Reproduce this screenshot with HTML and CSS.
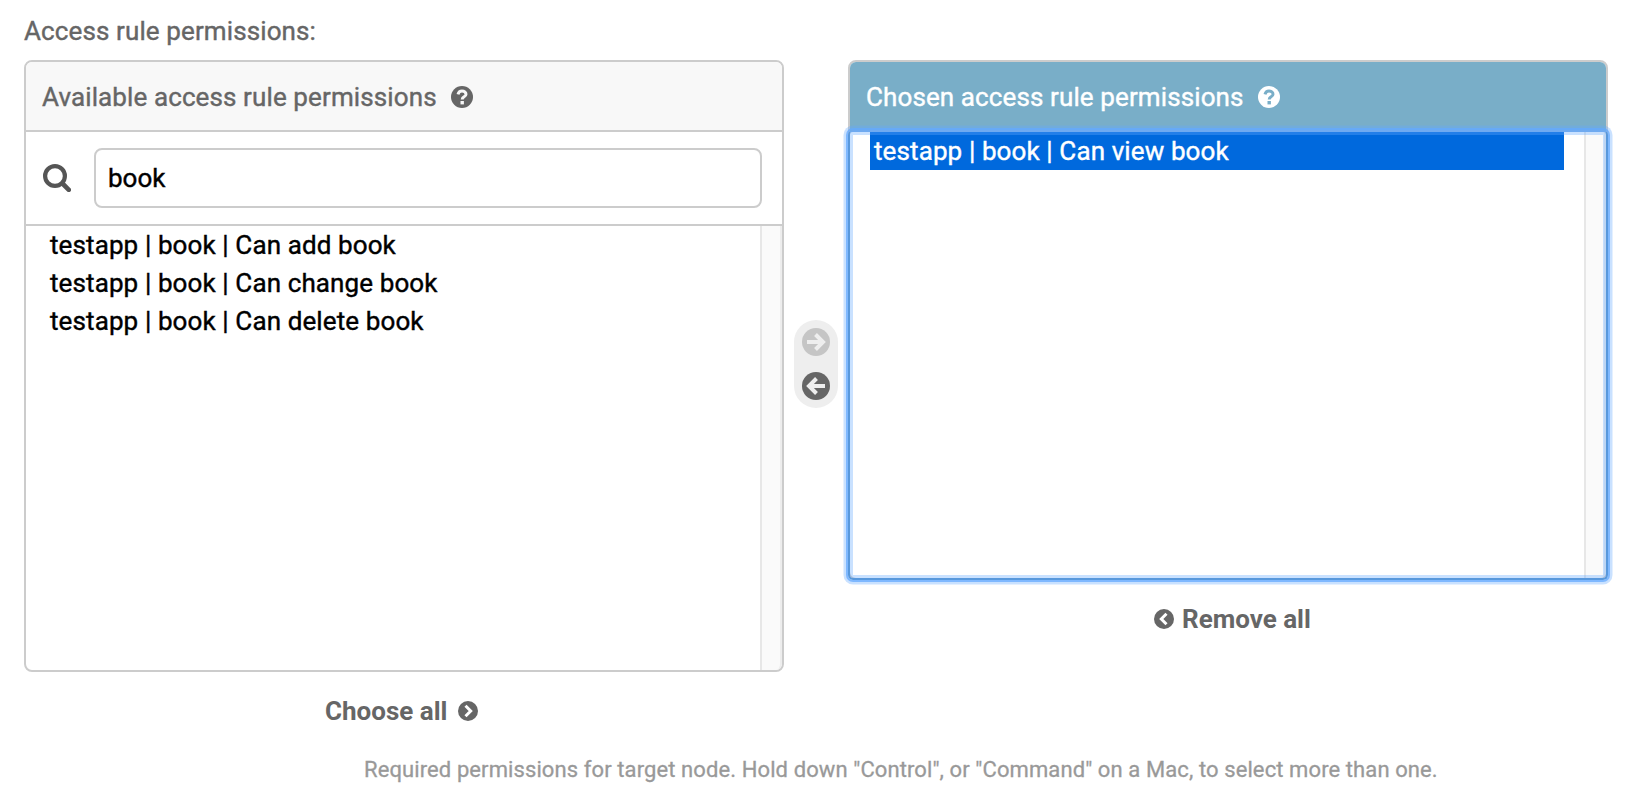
FILE: index.html
```html
<!DOCTYPE html>
<html lang="en">
<head>
<meta charset="utf-8">
<title>Access rule permissions</title>
<link rel="stylesheet" href="styles.css">
</head>
<body>
<div class="field">
  <div class="label">Access rule permissions:</div>
  <div class="selector">
    <div class="column">
      <div class="panel">
        <h2 class="head"><span>Available access rule permissions</span>
          <svg class="help-icon" viewBox="0 0 22 22"><circle cx="11" cy="11" r="11" fill="#666"/><path d="M7 8.300C7.600 6.100 9 5 11 5c2.300 0 4 1.300 4 3.200 0 2.800-3.800 2.500-3.800 5.200" fill="none" stroke="#f8f8f8" stroke-width="3"/><rect x="9.500" y="15" width="3.400" height="3.400" fill="#f8f8f8"/></svg>
        </h2>
        <div class="filter">
          <svg class="search-icon" viewBox="0 0 28 28"><circle cx="12" cy="12" r="9.900" fill="none" stroke="#555" stroke-width="4.200"/><path d="M19.500 19.500L25.800 25.800" stroke="#555" stroke-width="4.600" stroke-linecap="round"/></svg>
          <div class="input">book</div>
        </div>
        <div class="list">
          <div class="options">
            <div class="option">testapp | book | Can add book</div>
            <div class="option">testapp | book | Can change book</div>
            <div class="option">testapp | book | Can delete book</div>
          </div>
          <div class="gutter"></div>
        </div>
      </div>
      <div class="action choose"><span>Choose all</span>
        <svg class="action-icon" viewBox="0 0 20 20"><circle cx="10" cy="10" r="10" fill="#666"/><path d="M7.500 4.800L12.700 10l-5.200 5.200" fill="none" stroke="#fff" stroke-width="3"/></svg>
      </div>
    </div>
    <div class="chooser">
      <svg class="arrow" viewBox="0 0 28 28"><circle cx="14" cy="14" r="14" fill="#c5c5c5"/><path d="M5 14h16M13.500 6.500L21 14l-7.500 7.500" fill="none" stroke="#eee" stroke-width="4"/></svg>
      <svg class="arrow" viewBox="0 0 28 28"><circle cx="14" cy="14" r="14" fill="#666"/><path d="M23 14H7M14.500 6.500L7 14l7.500 7.500" fill="none" stroke="#eee" stroke-width="4"/></svg>
    </div>
    <div class="column">
      <div class="panel chosen">
        <h2 class="head"><span>Chosen access rule permissions</span>
          <svg class="help-icon" viewBox="0 0 22 22"><circle cx="11" cy="11" r="11" fill="#fff"/><path d="M7 8.300C7.600 6.100 9 5 11 5c2.300 0 4 1.300 4 3.200 0 2.800-3.800 2.500-3.800 5.200" fill="none" stroke="#79aec8" stroke-width="3"/><rect x="9.500" y="15" width="3.400" height="3.400" fill="#79aec8"/></svg>
        </h2>
        <div class="list">
          <div class="options">
            <div class="option selected">testapp | book | Can view book</div>
          </div>
          <div class="gutter"></div>
        </div>
      </div>
      <div class="action remove">
        <svg class="action-icon" viewBox="0 0 20 20"><circle cx="10" cy="10" r="10" fill="#666"/><path d="M12.500 4.800L7.300 10l5.200 5.200" fill="none" stroke="#fff" stroke-width="3"/></svg>
        <span>Remove all</span>
      </div>
    </div>
  </div>
  <p class="help">Required permissions for target node. Hold down "Control", or "Command" on a Mac, to select more than one.</p>
</div>
</body>
</html>
```
FILE: styles.css
```css
* { box-sizing: border-box; }
body { margin: 0; background: #fff; font: 26px/38px Roboto, sans-serif; letter-spacing: .11px; -webkit-text-stroke: .4px currentColor; color: #666; white-space: nowrap; }
svg { display: block; flex: none; }
.field { height: 798px; padding: 12px 0 0 24px; overflow: hidden; }
.label { height: 48px; }
.selector { display: flex; align-items: flex-start; height: 686px; }
.column { width: 760px; }
.panel { height: 612px; border: 2px solid #ccc; border-radius: 8px; display: flex; flex-direction: column; position: relative; }
.head { margin: 0; height: 70px; padding: 2px 16px 0; display: flex; align-items: center; gap: 14px; font-size: 26px; font-weight: 400; background: #f8f8f8; border-bottom: 2px solid #ccc; border-radius: 6px 6px 0 0; }
.help-icon { width: 22px; height: 22px; }
.filter { height: 94px; padding: 0 20px 0 17px; display: flex; align-items: center; border-bottom: 2px solid #ccc; }
.search-icon { width: 28px; height: 28px; margin-right: 23px; }
.input { flex: 1; height: 60px; padding: 9px 12px; border: 2px solid #ccc; border-radius: 8px; color: #000; letter-spacing: 0; }
.list { flex: 1; display: flex; }
.options { flex: 1; padding: 0 20px; color: #000; }
.option { height: 38px; padding-left: 4px; }
.gutter { width: 22px; background: #fafafa; border-left: 2px solid #e7e7e7; border-right: 2px solid #ededed; border-radius: 0 0 6px 0; }
.selected { background: #0069dd; color: #fff; }
.chooser { width: 44px; height: 88px; margin: 260px 10px 0; padding: 8px; display: flex; flex-direction: column; gap: 16px; background: #eee; border-radius: 22px; }
.arrow { width: 28px; height: 28px; }
.chosen { height: 520px; }
.chosen .head { padding-top: 0; background: #79aec8; color: #fff; border-bottom: 0; }
/* Focus ring drawn over the header edge and the list */
.chosen::after { content: ""; position: absolute; inset: 68px -2px -2px; border: 2px solid #5898dc; border-top-color: #6faaf0; border-radius: 5px; box-shadow: 0 0 0 2px rgba(100,170,255,.75), 0 0 0 4.5px rgba(100,170,255,.35), inset 0 0 0 3px rgba(100,170,255,.35); }
.action { display: flex; align-items: center; height: 38px; font-weight: 700; letter-spacing: 0; -webkit-text-stroke: 0; }
.action-icon { width: 20px; height: 20px; }
.choose { margin: 20px 0 0 301px; gap: 11px; }
.remove { margin: 20px 0 0 306px; gap: 8px; }
.help { margin: 5px 0 0 340px; font-size: 22px; line-height: 38px; letter-spacing: .1px; -webkit-text-stroke-width: .3px; color: #999; }
```
